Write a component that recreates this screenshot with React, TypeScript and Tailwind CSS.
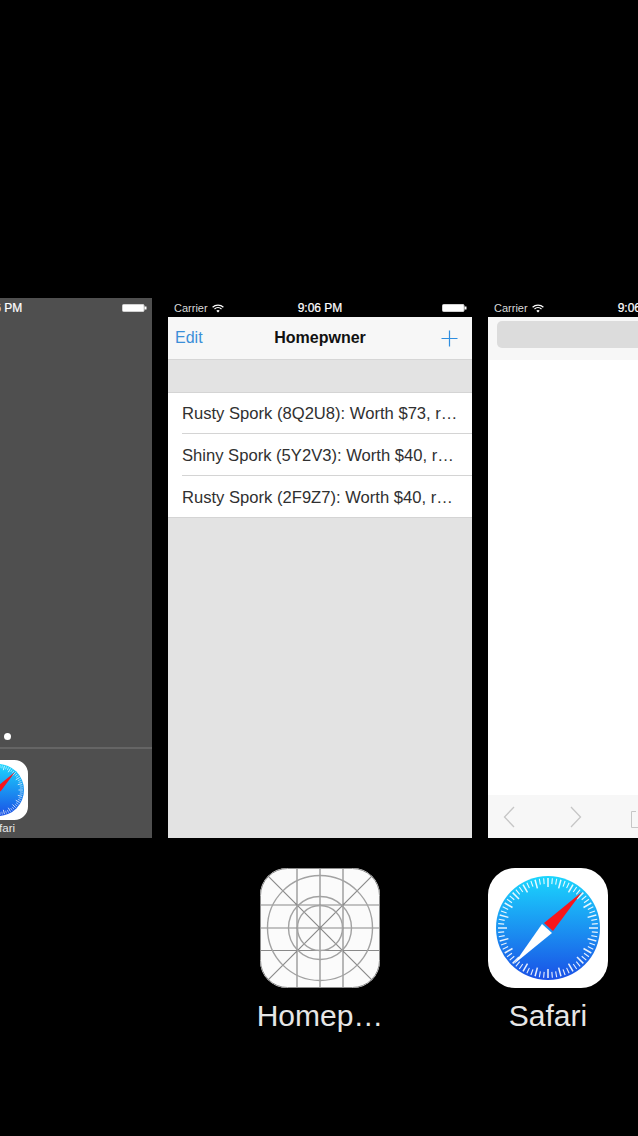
const items = [
  'Rusty Spork (8Q2U8): Worth $73, r…',
  'Shiny Spork (5Y2V3): Worth $40, r…',
  'Rusty Spork (2F9Z7): Worth $40, r…',
];

function Wifi() {
  return (
    <svg width="12" height="9" viewBox="0 0 12 9" fill="none" stroke="white" strokeWidth="1.2">
      <path d="M0.6 3.2C3.6 0.4 8.4 0.4 11.4 3.2" />
      <path d="M2.5 5C4.5 3.2 7.5 3.2 9.5 5" />
      <path d="M6 8.6L4.3 6.7C5.3 5.9 6.7 5.9 7.7 6.7Z" fill="white" stroke="none" />
    </svg>
  );
}

function Battery() {
  return (
    <svg width="25" height="8" viewBox="0 0 25 8">
      <rect x="0.5" y="0.5" width="21.5" height="7" rx="1" fill="white" stroke="#d0d0d0" />
      <rect x="22.5" y="2.5" width="2" height="3" fill="white" />
    </svg>
  );
}

function StatusBar({ bg }: { bg: string }) {
  return (
    <div className={`${bg} relative h-[19px] flex items-center justify-between pl-[6px] pr-[5px] text-white text-[11px] shrink-0`}>
      <div className="flex items-center gap-[4px] pt-[1px]">
        <span className="text-[#d8d8d8]">Carrier</span>
        <Wifi />
      </div>
      <span className="absolute left-0 right-0 pt-[1px] text-center text-[12px] [-webkit-text-stroke:0.2px_white]">9:06 PM</span>
      <Battery />
    </div>
  );
}

function SafariIcon({ size }: { size: number }) {
  const ticks = Array.from({ length: 72 }, (_, i) => i * 5);
  return (
    <svg width={size} height={size} viewBox="0 0 120 120" className="shrink-0">
      <defs>
        <linearGradient id="safariBlue" x1="0" y1="0" x2="0" y2="1">
          <stop offset="0" stopColor="#1bd6fd" />
          <stop offset="1" stopColor="#1a50e6" />
        </linearGradient>
      </defs>
      <rect width="120" height="120" rx="27" fill="white" />
      <circle cx="60" cy="60" r="52" fill="url(#safariBlue)" />
      {ticks.map((a) => (
        <line
          key={a}
          x1="60"
          y1="10"
          x2="60"
          y2={a % 15 === 0 ? 19 : 16}
          stroke="white"
          strokeOpacity="0.9"
          strokeWidth={a % 15 === 0 ? 1.5 : 1.1}
          transform={`rotate(${a} 60 60)`}
        />
      ))}
      <polygon points="94,24 56,55 65,63" fill="#f8151b" />
      <polygon points="26,96 54,56 64,65" fill="white" />
    </svg>
  );
}

function GridIcon() {
  return (
    <svg width="120" height="120" viewBox="0 0 120 120" fill="none" stroke="#8a8a8a" strokeWidth="1.2" className="shrink-0">
      <defs>
        <clipPath id="iconClip">
          <rect width="120" height="120" rx="27" />
        </clipPath>
      </defs>
      <rect width="120" height="120" rx="27" fill="#fbfbfb" stroke="none" />
      <g clipPath="url(#iconClip)">
        <path d="M37 0V120M60 0V120M83 0V120M0 37H120M0 60H120M0 82.5H120M0 0L120 120M120 0L0 120" />
        <circle cx="60" cy="60" r="52.5" strokeWidth="1.4" stroke="#a2a2a2" />
        <circle cx="60" cy="60" r="31.5" strokeWidth="1.4" stroke="#a2a2a2" />
        <circle cx="60" cy="60" r="22.5" strokeWidth="1.4" stroke="#a2a2a2" />
      </g>
      <rect x="0.5" y="0.5" width="119" height="119" rx="27" stroke="#8c8c8c" strokeWidth="1" />
    </svg>
  );
}

function HomeCard() {
  return (
    <div className="w-[304px] ml-[-152px] shrink-0 bg-[#4f4f4f] flex flex-col">
      <StatusBar bg="bg-[#4f4f4f]" />
      <div className="flex-1 flex flex-col justify-end">
        <div className="flex justify-center pl-[15px] pb-[7px]">
          <div className="w-[7px] h-[7px] rounded-full bg-white" />
        </div>
      </div>
      <div className="h-[91px] border-t-2 border-[#656565] flex flex-col items-center pt-[11px] pr-[4px]">
        <SafariIcon size={60} />
        <span className="text-[#e8e8e8] text-[11.5px] leading-[14px] mt-[1px] pl-[4px]">Safari</span>
      </div>
    </div>
  );
}

function HomepwnerCard() {
  return (
    <div className="w-[304px] shrink-0 bg-[#e3e3e3] flex flex-col">
      <StatusBar bg="bg-black" />
      <div className="relative h-[43px] bg-[#f7f7f7] border-b border-[#d6d6d6] flex items-center justify-between pl-[7px] pr-[14px]">
        <span className="text-[16px] text-[#3b8fd8]">Edit</span>
        <span className="absolute left-0 right-0 text-center text-[16px] font-bold text-[#111111]">Homepwner</span>
        <svg width="17" height="17" viewBox="0 0 17 17" stroke="#2f8ee0" strokeWidth="1.2">
          <path d="M8.5 0.5V16.5M0.5 8.5H16.5" />
        </svg>
      </div>
      <div className="h-[32px]" />
      <div className="bg-white border-y border-[#d4d4d4]">
        {items.map((item, i) => (
          <div key={item} className={i > 0 ? 'ml-[14px] border-t border-[#d4d4d4] h-[42px] flex items-center pt-[3px]' : 'ml-[14px] h-[40px] flex items-center pt-[2px]'}>
            <span className="text-[16.6px] text-[#303030] whitespace-nowrap">{item}</span>
          </div>
        ))}
      </div>
    </div>
  );
}

function SafariCard() {
  return (
    <div className="w-[304px] shrink-0 bg-white flex flex-col">
      <StatusBar bg="bg-black" />
      <div className="h-[43px] bg-[#f7f7f7] pt-[4px] px-[9px]">
        <div className="h-[27px] rounded-[5px] bg-[#dcdcdc]" />
      </div>
      <div className="flex-1" />
      <div className="h-[43px] bg-[#f7f7f7] flex items-center pl-[15px]">
        <svg width="12" height="22" viewBox="0 0 12 22" fill="none" stroke="#c6c6c6" strokeWidth="1.3">
          <path d="M11 1L1.5 11L11 21" />
        </svg>
        <svg width="12" height="22" viewBox="0 0 12 22" fill="none" stroke="#c6c6c6" strokeWidth="1.3" className="ml-[55px]">
          <path d="M1 1L10.5 11L1 21" />
        </svg>
        <svg width="18" height="24" viewBox="0 0 18 24" fill="none" stroke="#c6c6c6" className="ml-[49px] shrink-0">
          <path d="M5 6.5H0.5V22.5H17.5V6.5H13M9 1V15" />
        </svg>
      </div>
    </div>
  );
}

function AppLabel({ name, children }: { name: string; children: React.ReactNode }) {
  return (
    <div className="w-[228px] shrink-0 flex flex-col items-center">
      {children}
      <span className="mt-[8px] text-[#e6e6e6] text-[30px] leading-[40px]">{name}</span>
    </div>
  );
}

export default function App() {
  return (
    <div className="w-[638px] h-[1136px] overflow-hidden bg-black font-['Liberation_Sans',Arial,sans-serif]">
      <div className="pt-[298px] flex gap-[16px] h-[838px]">
        <HomeCard />
        <HomepwnerCard />
        <SafariCard />
      </div>
      <div className="pt-[30px] pl-[206px] flex">
        <AppLabel name="Homep…">
          <GridIcon />
        </AppLabel>
        <AppLabel name="Safari">
          <SafariIcon size={120} />
        </AppLabel>
      </div>
    </div>
  );
}
